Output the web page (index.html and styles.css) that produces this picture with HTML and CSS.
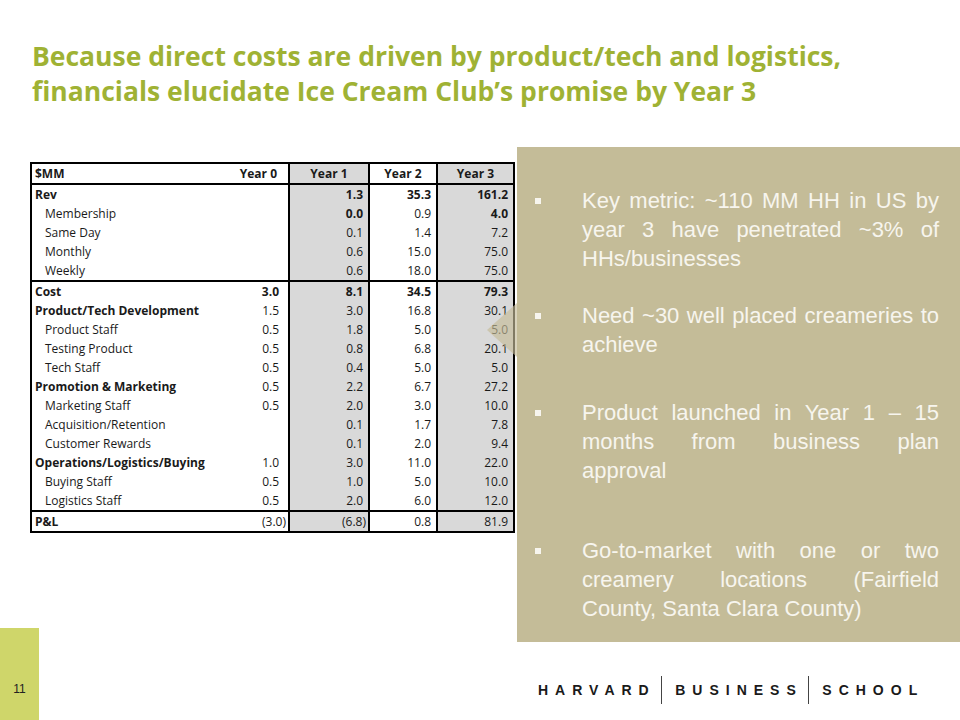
FILE: index.html
```html
<!DOCTYPE html>
<html>
<head>
<meta charset="utf-8">
<link rel="stylesheet" href="styles.css">
</head>
<body>
<div class="slide">
  <header class="title">
    <h1>Because direct costs are driven by product/tech and logistics,<br>financials elucidate Ice Cream Club’s promise by Year 3</h1>
  </header>
  <main class="main">
    <div class="table-wrap">
      <table class="fin">
        <colgroup>
          <col class="c-lbl"><col class="c-y0"><col class="c-y1"><col class="c-y2"><col class="c-y3">
        </colgroup>
        <tr class="hdr">
          <th class="lbl">$MM</th><th class="y0">Year 0</th><th class="y1 shade">Year 1</th><th class="y2">Year 2</th><th class="y3 shade">Year 3</th>
        </tr>
        <tr class="b"><td class="lbl">Rev</td><td class="y0"></td><td class="y1 shade">1.3</td><td class="y2">35.3</td><td class="y3 shade">161.2</td></tr>
        <tr><td class="lbl sub">Membership</td><td class="y0"></td><td class="y1 shade bold">0.0</td><td class="y2">0.9</td><td class="y3 shade bold">4.0</td></tr>
        <tr><td class="lbl sub">Same Day</td><td class="y0"></td><td class="y1 shade">0.1</td><td class="y2">1.4</td><td class="y3 shade">7.2</td></tr>
        <tr><td class="lbl sub">Monthly</td><td class="y0"></td><td class="y1 shade">0.6</td><td class="y2">15.0</td><td class="y3 shade">75.0</td></tr>
        <tr class="end"><td class="lbl sub">Weekly</td><td class="y0"></td><td class="y1 shade">0.6</td><td class="y2">18.0</td><td class="y3 shade">75.0</td></tr>
        <tr class="b"><td class="lbl">Cost</td><td class="y0">3.0</td><td class="y1 shade">8.1</td><td class="y2">34.5</td><td class="y3 shade">79.3</td></tr>
        <tr><td class="lbl bold">Product/Tech Development</td><td class="y0">1.5</td><td class="y1 shade">3.0</td><td class="y2">16.8</td><td class="y3 shade">30.1</td></tr>
        <tr><td class="lbl sub">Product Staff</td><td class="y0">0.5</td><td class="y1 shade">1.8</td><td class="y2">5.0</td><td class="y3 shade">5.0</td></tr>
        <tr><td class="lbl sub">Testing Product</td><td class="y0">0.5</td><td class="y1 shade">0.8</td><td class="y2">6.8</td><td class="y3 shade">20.1</td></tr>
        <tr><td class="lbl sub">Tech Staff</td><td class="y0">0.5</td><td class="y1 shade">0.4</td><td class="y2">5.0</td><td class="y3 shade">5.0</td></tr>
        <tr><td class="lbl bold">Promotion &amp; Marketing</td><td class="y0">0.5</td><td class="y1 shade">2.2</td><td class="y2">6.7</td><td class="y3 shade">27.2</td></tr>
        <tr><td class="lbl sub">Marketing Staff</td><td class="y0">0.5</td><td class="y1 shade">2.0</td><td class="y2">3.0</td><td class="y3 shade">10.0</td></tr>
        <tr><td class="lbl sub">Acquisition/Retention</td><td class="y0"></td><td class="y1 shade">0.1</td><td class="y2">1.7</td><td class="y3 shade">7.8</td></tr>
        <tr><td class="lbl sub">Customer Rewards</td><td class="y0"></td><td class="y1 shade">0.1</td><td class="y2">2.0</td><td class="y3 shade">9.4</td></tr>
        <tr><td class="lbl bold">Operations/Logistics/Buying</td><td class="y0">1.0</td><td class="y1 shade">3.0</td><td class="y2">11.0</td><td class="y3 shade">22.0</td></tr>
        <tr><td class="lbl sub">Buying Staff</td><td class="y0">0.5</td><td class="y1 shade">1.0</td><td class="y2">5.0</td><td class="y3 shade">10.0</td></tr>
        <tr class="end"><td class="lbl sub">Logistics Staff</td><td class="y0">0.5</td><td class="y1 shade">2.0</td><td class="y2">6.0</td><td class="y3 shade">12.0</td></tr>
        <tr class="pl"><td class="lbl bold">P&amp;L</td><td class="y0 neg">(3.0)</td><td class="y1 shade neg">(6.8)</td><td class="y2">0.8</td><td class="y3 shade">81.9</td></tr>
      </table>
    </div>
    <aside class="panel">
      <div class="pointer"></div>
      <ul class="points">
        <li class="p1"><span class="bullet"></span><p>Key metric: ~110 MM HH in US by year 3 have penetrated ~3% of HHs/businesses</p></li>
        <li class="p2"><span class="bullet"></span><p>Need ~30 well placed creameries to achieve</p></li>
        <li class="p3"><span class="bullet"></span><p class="forced">Product launched in Year 1 – 15 months from business plan<br>approval</p></li>
        <li class="p4"><span class="bullet"></span><p>Go-to-market with one or two creamery locations (Fairfield County,&nbsp;Santa Clara County)</p></li>
      </ul>
    </aside>
  </main>
  <footer class="footer">
    <div class="pagenum">11</div>
    <div class="logo">
      <span class="word">HARVARD</span><span class="divider"></span><span class="word">BUSINESS</span><span class="divider"></span><span class="word">SCHOOL</span>
    </div>
  </footer>
</div>
</body>
</html>
```
FILE: styles.css
```css
* { box-sizing: border-box; }
html, body { margin: 0; padding: 0; background: #ffffff; }
.slide {
  width: 960px;
  height: 720px;
  overflow: hidden;
  display: flex;
  flex-direction: column;
  font-family: "Liberation Sans", Arial, sans-serif;
}
.title {
  height: 147px;
  padding: 39px 0 0 32px;
}
.title h1 {
  margin: 0;
  font-family: "Open Sans", Lato, sans-serif;
  font-weight: 700;
  font-size: 26.5px;
  line-height: 35px;
  color: #9fb234;
}
.main {
  display: flex;
  height: 495px;
  align-items: flex-start;
}
.table-wrap {
  margin: 15px 0 0 30px;
}
.fin {
  border-collapse: collapse;
  table-layout: fixed;
  width: 483px;
  border: 2px solid #000;
  font-family: "Open Sans", Lato, sans-serif;
  font-size: 12px;
  color: #1a1a1a;
}
.c-lbl { width: 170px; }
.c-y0 { width: 88px; }
.c-y1 { width: 80px; }
.c-y2 { width: 68px; }
.c-y3 { width: 77px; }
.fin th, .fin td {
  height: 19px;
  padding: 0 5px 0 0;
  line-height: 19px;
  text-align: right;
  white-space: nowrap;
  overflow: visible;
}
.fin .lbl { text-align: left; padding-left: 3px; }
.fin .sub { padding-left: 13px; }
.fin .y0 { padding-right: 9px; }
.fin .y1, .fin .y2, .fin .y3 { border-left: 2px solid #000; }
.fin .neg { padding-right: 2px; }
.fin .shade { background: #d9d9d9; }
.fin .hdr th { font-weight: 700; border-bottom: 2px solid #000; height: 21px; }
.fin .hdr .y1, .fin .hdr .y2, .fin .hdr .y3 { text-align: center; padding-right: 0; }
.fin .hdr .y0 { padding-right: 11px; }
.fin tr.b td { font-weight: 700; }
.fin .bold { font-weight: 700; }
.fin tr.end td { border-bottom: 2px solid #000; }
.fin tr.pl td { height: 20px; }

.panel {
  position: relative;
  margin-left: 2px;
  width: 444px;
  height: 495px;
  background: #c4bc98;
  padding: 39px 21px 0 18px;
}
.pointer {
  position: absolute;
  left: -30px;
  top: 156px;
  width: 30px;
  height: 54px;
  background: rgba(196, 188, 152, 0.65);
  clip-path: polygon(0 50%, 100% 0, 100% 100%);
}
.points {
  list-style: none;
  margin: 0;
  padding: 0;
}
.points li {
  display: flex;
  align-items: flex-start;
}
.points .p2 { margin-top: 28px; }
.points .p3 { margin-top: 39px; }
.points .p4 { margin-top: 51px; }
.bullet {
  flex: none;
  width: 6px;
  height: 6px;
  margin: 12px 41px 0 0;
  background: #f7f5ee;
}
.points p {
  margin: 0;
  flex: 1;
  font-size: 22px;
  line-height: 29px;
  color: #f7f5ee;
  text-align: justify;
}
.points p.forced { text-align-last: justify; }

.footer {
  display: flex;
  flex: 1;
  align-items: flex-start;
}
.pagenum {
  width: 39px;
  height: 92px;
  margin-top: -14px;
  background: #cfd66a;
  padding-top: 54px;
  text-align: center;
  font-size: 12px;
  color: #222;
}
.logo {
  margin: 34px 0 0 499px;
  height: 28px;
  display: flex;
  align-items: center;
}
.word {
  font-family: "Liberation Sans", Arial, sans-serif;
  font-weight: 700;
  font-size: 14px;
  letter-spacing: 7px;
  color: #1a1a1a;
}
.divider {
  width: 1.5px;
  height: 28px;
  background: #444;
  margin: 0 13px 0 5px;
}
```
